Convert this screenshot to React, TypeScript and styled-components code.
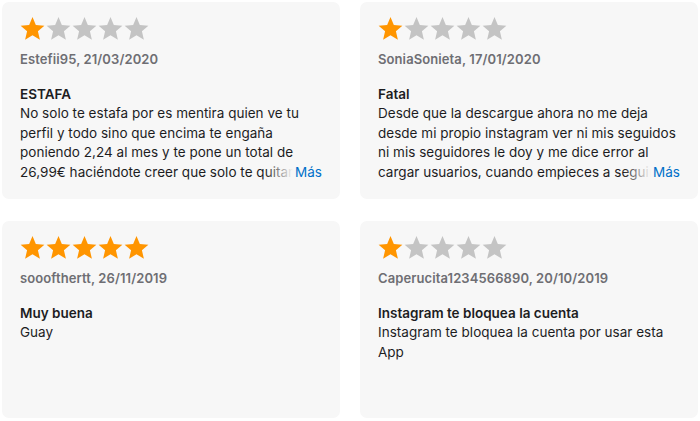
import React from "react";
import styled, { createGlobalStyle } from "styled-components";

const Global = createGlobalStyle`
  html, body { margin: 0; padding: 0; background: #ffffff; }
  body { font-family: Inter, "Noto Sans", sans-serif; -webkit-font-smoothing: antialiased; }
`;

const Grid = styled.div`
  display: grid;
  grid-template-columns: 338px 338px;
  column-gap: 20px;
  row-gap: 22px;
  padding: 2px;
`;

const Card = styled.article`
  box-sizing: border-box;
  height: 197px;
  background: #f7f7f7;
  border-radius: 7px;
  padding: 14px 18px 0 18px;
  display: flex;
  flex-direction: column;
`;

const Stars = styled.div`
  display: flex;
  gap: 1px;
  height: 25px;
`;

const StarSvg = styled.svg<{ $on: boolean }>`
  width: 25px;
  height: 25px;
  fill: ${(p) => (p.$on ? "#ff9500" : "#c4c4c4")};
`;

const Meta = styled.div`
  margin-top: 10px;
  font-size: 13px;
  font-weight: 600;
  color: #6e6e73;
  line-height: 16px;
  letter-spacing: 0.1px;
`;

const Title = styled.h3`
  margin: 18px 0 0 0;
  font-size: 13.5px;
  font-weight: 600;
  color: #1d1d1f;
  line-height: 19px;
`;

const BodyWrap = styled.div`
  position: relative;
  max-height: 78px;
  overflow: hidden;
`;

const Body = styled.p`
  margin: 0;
  font-size: 13.5px;
  font-weight: 400;
  color: #1d1d1f;
  line-height: 19.5px;
  letter-spacing: 0.02px;
`;

const More = styled.span`
  position: absolute;
  right: 0;
  bottom: 0;
  height: 19.5px;
  line-height: 19.5px;
  font-size: 13.5px;
  color: #0070c9;
  padding-left: 30px;
  background: linear-gradient(to right, rgba(247, 247, 247, 0) 0, #f7f7f7 28px);
`;

const Star = ({ on }: { on: boolean }) => (
  <StarSvg $on={on} viewBox="0 0 24 24">
    <polygon points="12,1 15.2,8.6 23.4,9.3 17.2,14.7 19.1,22.8 12,18.5 4.9,22.8 6.8,14.7 0.6,9.3 8.8,8.6" />
  </StarSvg>
);

type Review = { rating: number; user: string; date: string; title: string; text: string; more?: boolean };

const reviews: Review[] = [
  {
    rating: 1,
    user: "Estefii95",
    date: "21/03/2020",
    title: "ESTAFA",
    text:
      "No solo te estafa por es mentira quien ve tu perfil y todo sino que encima te engaña poniendo 2,24 al mes y te pone un total de 26,99€ haciéndote creer que solo te quitan eso al mes y luego te cobran todo de golpe",
    more: true,
  },
  {
    rating: 1,
    user: "SoniaSonieta",
    date: "17/01/2020",
    title: "Fatal",
    text:
      "Desde que la descargue ahora no me deja desde mi propio instagram ver ni mis seguidos ni mis seguidores le doy y me dice error al cargar usuarios, cuando empieces a seguir a alguien no te deja",
    more: true,
  },
  {
    rating: 5,
    user: "sooofthertt",
    date: "26/11/2019",
    title: "Muy buena",
    text: "Guay",
  },
  {
    rating: 1,
    user: "Caperucita1234566890",
    date: "20/10/2019",
    title: "Instagram te bloquea la cuenta",
    text: "Instagram te bloquea la cuenta por usar esta App",
  },
];

export default function App() {
  return (
    <>
      <Global />
      <Grid>
        {reviews.map((r) => (
          <Card key={r.user}>
            <Stars>
              {[0, 1, 2, 3, 4].map((i) => (
                <Star key={i} on={i < r.rating} />
              ))}
            </Stars>
            <Meta>
              {r.user}, {r.date}
            </Meta>
            <Title>{r.title}</Title>
            <BodyWrap>
              <Body>{r.text}</Body>
              {r.more && <More>Más</More>}
            </BodyWrap>
          </Card>
        ))}
      </Grid>
    </>
  );
}
